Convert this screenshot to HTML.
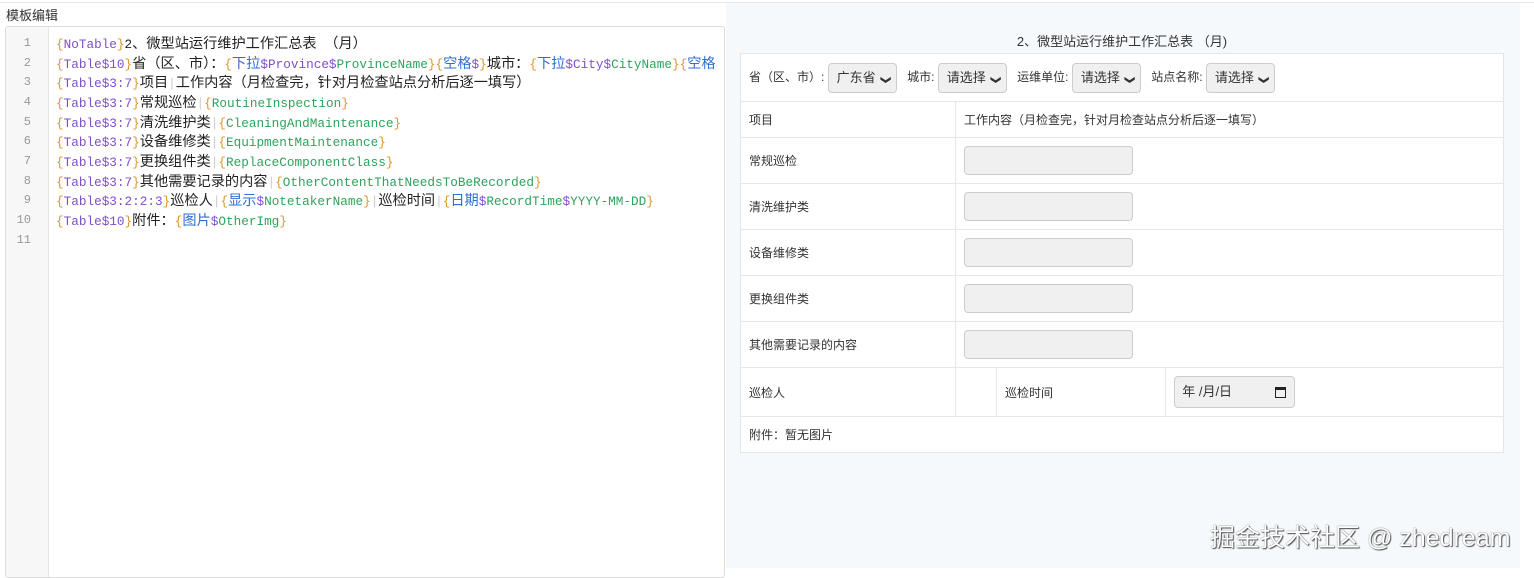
<!DOCTYPE html>
<html><head><meta charset="utf-8"><style>
body{margin:0;width:1534px;height:568px;overflow:hidden;background:#fff;font-family:"Liberation Sans","Noto Sans CJK SC",sans-serif;position:relative}
.a{position:absolute}
.title{left:6px;top:5px;font-size:13px;color:#333}
.ed{left:5px;top:26px;width:718px;height:550px;border:1px solid #ddd;border-radius:3px;background:#fff;overflow:hidden}
.gut{left:0;top:0;width:42px;height:100%;background:#f7f7f7;border-right:1px solid #e5e5e5}
.ln{position:absolute;left:0;width:25px;text-align:right;font-family:"Liberation Mono",monospace;font-size:12px;color:#999}
.code{position:absolute;left:50px;font-family:"Liberation Mono","Noto Sans CJK SC",monospace;font-size:12.7px;color:#222;white-space:nowrap}
.code i{font-style:normal;font-size:14.2px;font-family:"Noto Sans CJK SC",sans-serif}
.b{color:#e0952c}.p{color:#7e4fc9}.g{color:#2ea35b}.bl{color:#2f6fd3}.s{color:#ccc}
.rp{left:726px;top:3px;width:794px;height:565px;background:#f6f9fc}
table{position:absolute;left:740px;top:53px;width:764px;border-collapse:collapse;background:#fff;font-size:12px;color:#333}
td{border:1px solid #e6e6e6;padding:0 8px}
.sel{display:inline-block;border:1px solid #ccc;border-radius:4px;background:#f0f0f0;height:28px;line-height:28px;padding:0 7px 0 8px;font-size:13px;vertical-align:middle}
.sel b{font-size:10px;margin-left:5px}
.inp{width:167px;height:27px;border:1px solid #ccc;border-radius:4px;background:#f0f0f0}
.wm{left:1210px;top:518px;font-size:25px;color:#fff;text-shadow:0 0 1px #333,1px 1px 1px #555;white-space:nowrap}
</style></head><body>
<div class="a" style="left:0;top:2px;width:1534px;border-top:1px solid #e8e8e8"></div>
<div class="a title">模板编辑</div>
<div class="a ed"><div class="a gut"></div>
<div id="c"></div>
</div>
<div class="a rp"></div>
<div class="a" style="left:740px;width:764px;top:31px;text-align:center;font-size:13px;color:#333">2、微型站运行维护工作汇总表 （月)</div>
<table>
<tr style="height:48px"><td colspan="4">省（区、市）: <span class="sel">广东省<b>❯</b></span>&nbsp;&nbsp; 城市: <span class="sel">请选择<b>❯</b></span>&nbsp;&nbsp; 运维单位: <span class="sel">请选择<b>❯</b></span>&nbsp;&nbsp; 站点名称: <span class="sel">请选择<b>❯</b></span></td></tr>
<tr style="height:36px"><td style="width:198px">项目</td><td colspan="3">工作内容（月检查完，针对月检查站点分析后逐一填写）</td></tr>
<tr style="height:46px"><td>常规巡检</td><td colspan="3"><div class="inp"></div></td></tr>
<tr style="height:46px"><td>清洗维护类</td><td colspan="3"><div class="inp"></div></td></tr>
<tr style="height:46px"><td>设备维修类</td><td colspan="3"><div class="inp"></div></td></tr>
<tr style="height:46px"><td>更换组件类</td><td colspan="3"><div class="inp"></div></td></tr>
<tr style="height:46px"><td>其他需要记录的内容</td><td colspan="3"><div class="inp"></div></td></tr>
<tr style="height:49px"><td>巡检人</td><td style="width:24px"></td><td style="width:152px">巡检时间</td><td><div class="inp" style="width:119px;height:30px;line-height:30px;font-size:13px;position:relative">&nbsp;&nbsp;年 /月/日<span style="position:absolute;right:8px;top:10px;width:9px;height:7px;border:1.5px solid #222;border-top-width:3px"></span></div></td></tr>
<tr style="height:36px"><td colspan="4">附件：暂无图片</td></tr>
</table>
<div class="a wm">掘金技术社区 @ zhedream</div>
<script>
document.querySelectorAll('.sel b').forEach(function(e){e.style.display='inline-block';e.style.transform='rotate(90deg)';});
var L=[
'<span class="b">{</span><span class="p">NoTable</span><span class="b">}</span>2、微型站运行维护工作汇总表 （月）',
'<span class="b">{</span><span class="p">Table$10</span><span class="b">}</span>省（区、市）：<span class="b">{</span><span class="bl">下拉</span><span class="p">$Province$</span><span class="g">ProvinceName</span><span class="b">}{</span><span class="bl">空格</span><span class="p">$</span><span class="b">}</span>城市：<span class="b">{</span><span class="bl">下拉</span><span class="p">$City$</span><span class="g">CityName</span><span class="b">}{</span><span class="bl">空格</span>',
'<span class="b">{</span><span class="p">Table$3:7</span><span class="b">}</span>项目<span class="s">|</span>工作内容（月检查完，针对月检查站点分析后逐一填写）',
'<span class="b">{</span><span class="p">Table$3:7</span><span class="b">}</span>常规巡检<span class="s">|</span><span class="b">{</span><span class="g">RoutineInspection</span><span class="b">}</span>',
'<span class="b">{</span><span class="p">Table$3:7</span><span class="b">}</span>清洗维护类<span class="s">|</span><span class="b">{</span><span class="g">CleaningAndMaintenance</span><span class="b">}</span>',
'<span class="b">{</span><span class="p">Table$3:7</span><span class="b">}</span>设备维修类<span class="s">|</span><span class="b">{</span><span class="g">EquipmentMaintenance</span><span class="b">}</span>',
'<span class="b">{</span><span class="p">Table$3:7</span><span class="b">}</span>更换组件类<span class="s">|</span><span class="b">{</span><span class="g">ReplaceComponentClass</span><span class="b">}</span>',
'<span class="b">{</span><span class="p">Table$3:7</span><span class="b">}</span>其他需要记录的内容<span class="s">|</span><span class="b">{</span><span class="g">OtherContentThatNeedsToBeRecorded</span><span class="b">}</span>',
'<span class="b">{</span><span class="p">Table$3:2:2:3</span><span class="b">}</span>巡检人<span class="s">|</span><span class="b">{</span><span class="bl">显示</span><span class="p">$</span><span class="g">NotetakerName</span><span class="b">}</span><span class="s">|</span>巡检时间<span class="s">|</span><span class="b">{</span><span class="bl">日期</span><span class="p">$</span><span class="g">RecordTime</span><span class="p">$</span><span class="g">YYYY-MM-DD</span><span class="b">}</span>',
'<span class="b">{</span><span class="p">Table$10</span><span class="b">}</span>附件：<span class="b">{</span><span class="bl">图片</span><span class="p">$</span><span class="g">OtherImg</span><span class="b">}</span>',
''];
var h='';for(var i=0;i<11;i++){var t=6+i*19.67;var s=L[i].replace(/[\u3000-\uffff]+/g,function(m){return '<i>'+m+'</i>';});h+='<div class="ln" style="top:'+(t+3)+'px">'+(i+1)+'</div><div class="code" style="top:'+t+'px;width:668px;overflow:hidden">'+s+'</div>';}
document.getElementById('c').innerHTML=h;
</script>
</body></html>
